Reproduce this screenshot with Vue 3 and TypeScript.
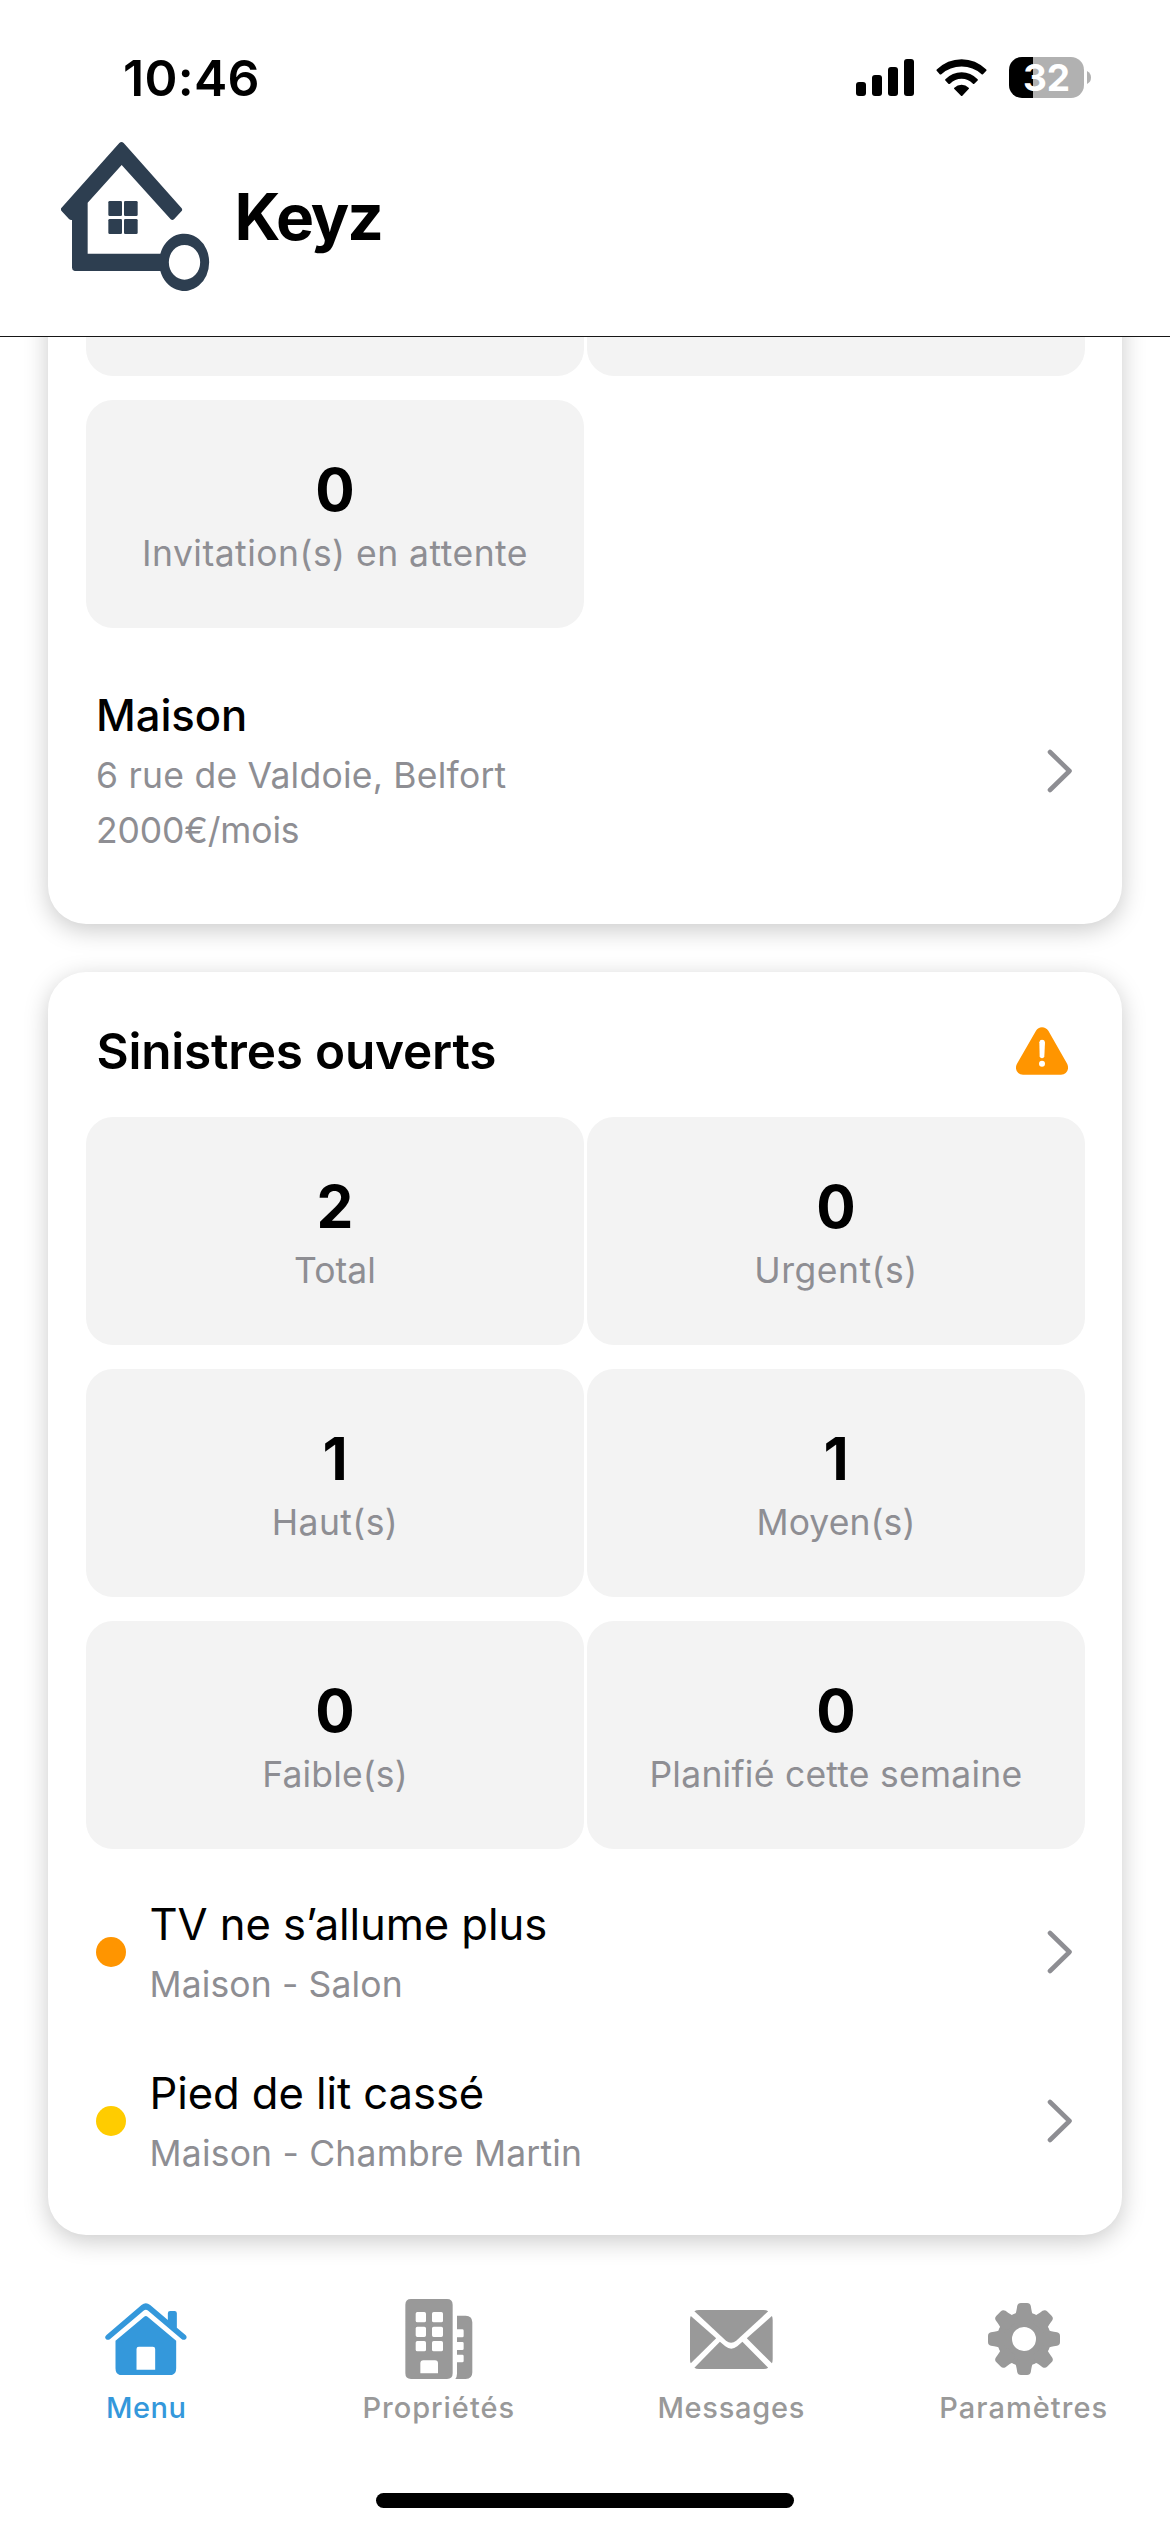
<script setup lang="ts">
interface Stat {
  value: number
  label: string
  tracking: number
}

interface Incident {
  title: string
  place: string
  color: string
  tracking: number
}

interface Tab {
  id: 'home' | 'building' | 'mail' | 'gear'
  label: string
  tracking: number
}

const incidentStats: Stat[] = [
  { value: 2, label: 'Total', tracking: 0.06 },
  { value: 0, label: 'Urgent(s)', tracking: 0.5 },
  { value: 1, label: 'Haut(s)', tracking: 0.4 },
  { value: 1, label: 'Moyen(s)', tracking: 0.1 },
  { value: 0, label: 'Faible(s)', tracking: 0.15 },
  { value: 0, label: 'Planifié cette semaine', tracking: 0.25 },
]

const incidents: Incident[] = [
  { title: 'TV ne s’allume plus', place: 'Maison - Salon', color: '#ff9500', tracking: 0.13 },
  { title: 'Pied de lit cassé', place: 'Maison - Chambre Martin', color: '#ffcc00', tracking: 0.2 },
]

const tabs: Tab[] = [
  { id: 'home', label: 'Menu', tracking: 0.55 },
  { id: 'building', label: 'Propriétés', tracking: 0.97 },
  { id: 'mail', label: 'Messages', tracking: 0.74 },
  { id: 'gear', label: 'Paramètres', tracking: 1.06 },
]

const activeTab = 'home'
const gearAngles = [0, 45, 90, 135, 180, 225, 270, 315]
</script>

<template>
  <div class="screen">
    <header class="header">
      <div class="status-bar">
        <span class="time">10:46</span>
        <div class="status-icons">
          <svg class="signal" width="58" height="37" viewBox="0 0 58 37">
            <rect x="0" y="23" width="10" height="14" rx="3" />
            <rect x="16" y="16" width="10" height="21" rx="3" />
            <rect x="32" y="8" width="10" height="29" rx="3" />
            <rect x="48" y="0" width="10" height="37" rx="3" />
          </svg>
          <svg class="wifi" width="51" height="37.6" viewBox="408 85.5 153 113">
            <path d="M410 117Q442 86 485 86Q527 86 559 117Q561 119 559 121L549 131Q547 133 545 131Q519 108 485 108Q450 108 424 131Q421 133 419 131L410 121Q408 119 410 117Z" />
            <path d="M436 146Q457 125 485 125Q512 125 533 146Q535 148 533 150L523 160Q521 162 519 160Q504 145 485 145Q465 145 450 160Q447 162 445 160L436 150Q434 148 436 146Z" />
            <path d="M463 172Q472 163 485 163Q497 163 506 172Q508 174 506 176L487 196Q485 198 483 196L463 176Q461 174 463 172Z" />
          </svg>
          <div class="battery">
            <span class="battery-body">32</span>
            <svg width="4" height="13" viewBox="0 0 4 13"><path d="M0 0Q4 2 4 6.5Q4 11 0 13Z" fill="#b1b1b1" /></svg>
          </div>
        </div>
      </div>
      <div class="brand">
        <svg class="logo" width="149" height="149" viewBox="63 36 447 447">
          <path d="M238 39Q244.500 33 251 39L425 235Q428 239 425 243L402 268Q397 272 392 268L245 105L143 218V371H361A75 86 0 1 1 361 423H104Q96 421 96 413V270Q91 271 87 267L64 242Q61 238 64 234ZM433.500 345A47 52 0 1 0 433.500 449A47 52 0 1 0 433.500 345Z" fill="#2d3e50" fill-rule="evenodd" />
          <g fill="#2d3e50">
            <rect x="205" y="213" width="41" height="45" rx="4" />
            <rect x="252" y="213" width="41" height="45" rx="4" />
            <rect x="205" y="267" width="41" height="45" rx="4" />
            <rect x="252" y="267" width="41" height="45" rx="4" />
          </g>
        </svg>
        <h1>Keyz</h1>
      </div>
    </header>

    <main class="content">
      <section class="card properties">
        <div class="tiles">
          <div class="tile"></div>
          <div class="tile"></div>
          <div class="tile">
            <strong>0</strong>
            <span :style="{ letterSpacing: '0.48px' }">Invitation(s) en attente</span>
          </div>
        </div>
        <div class="row property-row">
          <div class="row-text">
            <h3>Maison</h3>
            <p class="address">6 rue de Valdoie, Belfort</p>
            <p class="rent">2000€/mois</p>
          </div>
          <svg class="chevron" width="26" height="44" viewBox="0 0 26 44"><path d="M3 3L22.500 22L3 41" /></svg>
        </div>
      </section>

      <section class="card incidents">
        <div class="card-head">
          <h2>Sinistres ouverts</h2>
          <svg width="52" height="48" viewBox="348 982 156 143">
            <path d="M408 993Q414 982 426 982Q438 982 445 993L501 1091Q505 1099 504 1107Q501 1124 483 1125H369Q351 1124 348 1107Q347 1099 351 1092Z" fill="#ff9500" />
            <path d="M418 1027Q419 1020 426 1020Q434 1020 435 1027L433 1069Q432 1075 426 1075Q420 1075 419 1069Z" fill="#fff" />
            <circle cx="426" cy="1092" r="9" fill="#fff" />
          </svg>
        </div>
        <div class="tiles">
          <div v-for="stat in incidentStats" :key="stat.label" class="tile">
            <strong>{{ stat.value }}</strong>
            <span :style="{ letterSpacing: stat.tracking + 'px' }">{{ stat.label }}</span>
          </div>
        </div>
        <div v-for="item in incidents" :key="item.title" class="row incident-row">
          <i class="dot" :style="{ background: item.color }"></i>
          <div class="row-text">
            <h3>{{ item.title }}</h3>
            <p :style="{ letterSpacing: item.tracking + 'px' }">{{ item.place }}</p>
          </div>
          <svg class="chevron" width="26" height="44" viewBox="0 0 26 44"><path d="M3 3L22.500 22L3 41" /></svg>
        </div>
      </section>
    </main>

    <nav class="tab-bar">
      <div class="tabs">
        <a v-for="tab in tabs" :key="tab.id" class="tab" :class="{ active: tab.id === activeTab }">
          <span class="tab-icon">
            <svg v-if="tab.id === 'home'" width="81.700" height="72.700" viewBox="137.500 98 245 218">
              <path d="M142 194L247 104Q260 93 273 104L326 149V129Q326 122 333 122H346Q353 122 353 129V172L379 194Q385 200 380 206Q374 211 367 206L267 121Q260 115 253 121L153 206Q146 211 140 206Q135 200 142 194Z" />
              <path d="M169 211L255 139Q260 135 265 139L351 211V294Q351 315 330 315H190Q169 315 169 294ZM239 229Q232 229 232 236V298H288V236Q288 229 281 229Z" fill-rule="evenodd" />
            </svg>
            <svg v-else-if="tab.id === 'building'" width="68" height="80.300" viewBox="1032 86 204 241">
              <path d="M1050 86H1158Q1175 86 1175 103V309Q1175 326 1158 326H1050Q1033 326 1033 309V103Q1033 86 1050 86ZM1069 125Q1064 125 1064 130V151Q1064 156 1069 156H1090Q1095 156 1095 151V130Q1095 125 1090 125ZM1118 125Q1113 125 1113 130V151Q1113 156 1118 156H1141Q1146 156 1146 151V130Q1146 125 1141 125ZM1069 169Q1064 169 1064 174V195Q1064 200 1069 200H1090Q1095 200 1095 195V174Q1095 169 1090 169ZM1118 169Q1113 169 1113 174V195Q1113 200 1118 200H1141Q1146 200 1146 195V174Q1146 169 1141 169ZM1069 212Q1064 212 1064 217V238Q1064 243 1069 243H1090Q1095 243 1095 238V217Q1095 212 1090 212ZM1118 212Q1113 212 1113 217V238Q1113 243 1118 243H1141Q1146 243 1146 238V217Q1146 212 1141 212ZM1087 270Q1078 270 1078 279V309H1131V279Q1131 270 1122 270Z" fill-rule="evenodd" />
              <path d="M1188 136H1214Q1234 136 1234 156V306Q1234 326 1214 326H1183Q1188 319 1188 310V276H1204Q1208 276 1208 272V257Q1208 253 1204 253H1188V239H1204Q1208 239 1208 235V219Q1208 215 1204 215H1188V201H1204Q1208 201 1208 197V181Q1208 177 1204 177H1188Z" />
            </svg>
            <svg v-else-if="tab.id === 'mail'" width="82.700" height="59" viewBox="0 0 82.700 59">
              <path d="M4.400 1.300Q6 0 9 0H73.600Q76.500 0 78.200 1.300L46.200 30.700Q41.100 35 36 30.700Z" />
              <path d="M0.800 6L26.200 28.300L0.800 53.300Q0 52 0 49V10Q0 7.500 0.800 6Z" />
              <path d="M81.900 6L56.800 28.300L81.900 53.300Q82.700 52 82.700 49V10Q82.700 7.500 81.900 6Z" />
              <path d="M29.900 31.700L35.300 36.300Q41.200 41.200 47.300 36.300L52.400 31.700L78.200 57.700Q76.500 59 73.600 59H9Q6 59 4.400 57.700Z" />
            </svg>
            <svg v-else width="72" height="72" viewBox="-36 -36 72 72">
              <path d="M0 -27A27 27 0 1 1 0 27A27 27 0 1 1 0 -27ZM0 -12A12 12 0 1 0 0 12A12 12 0 1 0 0 -12Z" fill-rule="evenodd" />
              <path v-for="angle in gearAngles" :key="angle" :transform="`rotate(${angle})`" d="M-8.800 -24.500Q-7.800 -26 -6.800 -33Q-6.200 -36 -3 -36H3Q6.200 -36 6.800 -33Q7.800 -26 8.800 -24.500L5 -18H-5Z" />
            </svg>
          </span>
          <span class="tab-label" :style="{ letterSpacing: tab.tracking + 'px' }">{{ tab.label }}</span>
        </a>
      </div>
      <div class="home-indicator"></div>
    </nav>
  </div>
</template>

<style>
body {
  margin: 0;
  background: #fff;
}
</style>

<style scoped>
.screen {
  display: flex;
  flex-direction: column;
  width: 1170px;
  height: 2532px;
  overflow: hidden;
  background: #fff;
  color: #000;
  font-family: Inter, "Liberation Sans", sans-serif;
}

h1, h2, h3, p {
  margin: 0;
}

svg {
  display: block;
  flex: none;
}

.header {
  flex: none;
  height: 336px;
  border-bottom: 1px solid #161616;
}

.status-bar {
  display: flex;
  justify-content: space-between;
  height: 95px;
  padding: 47px 79px 0 123px;
}

.time {
  font-size: 50px;
  font-weight: 600;
  line-height: 62px;
  letter-spacing: 0.28px;
}

.status-icons {
  display: flex;
  align-items: center;
  height: 61px;
}

.wifi {
  margin: 0 22px;
}

.battery {
  display: flex;
  align-items: center;
  gap: 3px;
}

.battery-body {
  width: 75px;
  height: 41px;
  border-radius: 13px;
  background: linear-gradient(90deg, #000 24px, #b1b1b1 24px);
  color: #fff;
  font-size: 37px;
  font-weight: 700;
  line-height: 41px;
  text-align: center;
}

.brand {
  display: flex;
  align-items: center;
  height: 149px;
  padding-left: 61px;
}

.brand h1 {
  margin-left: 24.5px;
  font-size: 64px;
  font-weight: 700;
  line-height: 78px;
  letter-spacing: -2.07px;
}

.content {
  flex: 1;
  min-height: 0;
  overflow: hidden;
}

.card {
  box-sizing: border-box;
  margin: 0 48px;
  border-radius: 38px;
  background: #fff;
  box-shadow: 0 6px 24px rgba(0, 0, 0, 0.21);
}

.properties {
  height: 812px;
  margin-top: -225px;
  padding-top: 36px;
}

.incidents {
  height: 1263px;
  margin-top: 48px;
  padding-top: 49px;
}

.card-head {
  display: flex;
  align-items: center;
  justify-content: space-between;
  height: 60px;
  padding: 0 54px 0 48.5px;
  margin-bottom: 36px;
}

.card-head h2 {
  font-size: 49.5px;
  font-weight: 600;
  line-height: 60px;
  letter-spacing: -0.2px;
}

.tiles {
  display: grid;
  grid-template-columns: 498px 498px;
  grid-auto-rows: 228px;
  gap: 24px 3px;
  padding-left: 38px;
}

.tile {
  display: flex;
  flex-direction: column;
  align-items: center;
  box-sizing: border-box;
  padding-top: 55px;
  border-radius: 27px;
  background: #f3f3f3;
}

.tile strong {
  font-size: 58.5px;
  font-weight: 700;
  line-height: 70px;
}

.tile span {
  color: #8e8e93;
  font-size: 35.5px;
  line-height: 58px;
}

.row {
  display: flex;
  align-items: center;
  padding: 0 49px 0 48px;
}

.row-text {
  flex: 1;
}

.row h3 {
  margin-bottom: 0.5px;
  font-size: 43.6px;
  font-weight: 400;
  line-height: 62px;
  letter-spacing: -0.08px;
}

.row p {
  color: #8e8e93;
  font-size: 35.5px;
  line-height: 55px;
}

.property-row {
  margin-top: 57px;
}

.property-row h3 {
  font-weight: 500;
}

.address {
  letter-spacing: 0.23px;
}

.rent {
  letter-spacing: -0.16px;
}

.incident-row {
  margin-top: 45px;
}

.incident-row + .incident-row {
  margin-top: 51.5px;
}

.dot {
  width: 30px;
  height: 30px;
  margin: 0 23.5px 1.5px 0;
  border-radius: 50%;
}

.chevron {
  margin-bottom: 1.5px;
}

.chevron path {
  fill: none;
  stroke: #8e8e93;
  stroke-width: 4.6;
  stroke-linecap: round;
  stroke-linejoin: round;
}

.tab-bar {
  display: flex;
  flex: none;
  flex-direction: column;
  justify-content: space-between;
  align-items: center;
  box-sizing: border-box;
  height: 262px;
  padding: 28px 0 24px;
  background: #fff;
}

.tabs {
  display: flex;
  width: 100%;
}

.tab {
  display: flex;
  flex: 1;
  flex-direction: column;
  align-items: center;
  color: #999;
}

.tab.active {
  color: #3498db;
}

.tab-icon {
  display: flex;
  align-items: center;
  height: 82px;
}

.tab-icon svg {
  fill: currentColor;
}

.tab-label {
  margin-top: 9.5px;
  font-size: 29px;
  font-weight: 500;
  line-height: 36px;
}

.home-indicator {
  width: 418px;
  height: 15px;
  border-radius: 8px;
  background: #000;
}
</style>
